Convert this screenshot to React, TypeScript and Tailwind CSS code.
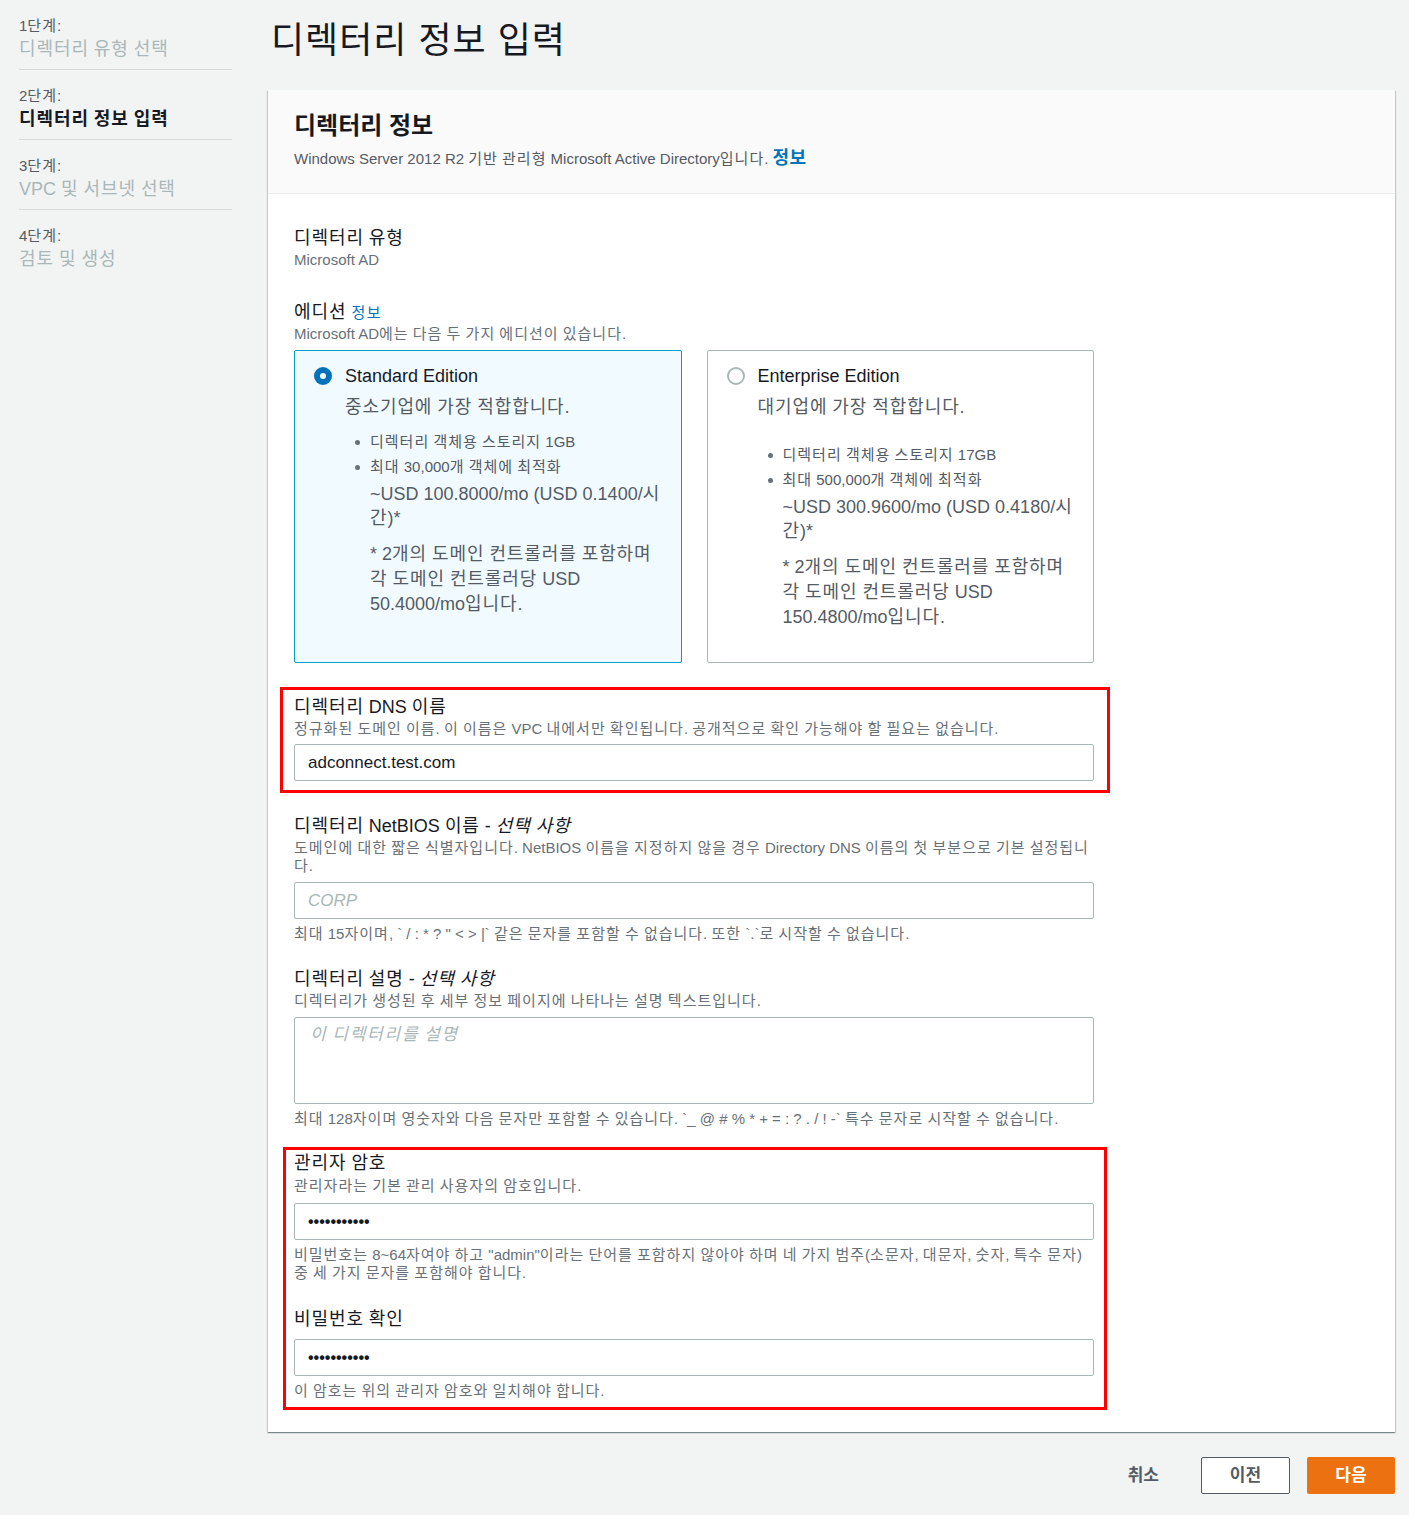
import React from "react";

const font = {
  fontFamily: '"Liberation Sans", "Noto Sans CJK KR", sans-serif',
};

// Hangul runs get a little extra spacing so the Korean reads as wide as in the screenshot
function ko(text: string, cls: string) {
  return text.split(/([\uAC00-\uD7A3]+)/).map((part, i) =>
    /[\uAC00-\uD7A3]/.test(part) ? (
      <span key={i} className={cls}>
        {part}
      </span>
    ) : (
      part
    )
  );
}

const K15 = "tracking-[1px]";
const K18 = "tracking-[0.9px]";

const steps = [
  { step: "1단계:", title: "디렉터리 유형 선택", active: false },
  { step: "2단계:", title: "디렉터리 정보 입력", active: true },
  { step: "3단계:", title: "VPC 및 서브넷 선택", active: false },
  { step: "4단계:", title: "검토 및 생성", active: false },
];

const editions = [
  {
    name: "Standard Edition",
    desc: "중소기업에 가장 적합합니다.",
    bullets: ["디렉터리 객체용 스토리지 1GB", "최대 30,000개 객체에 최적화"],
    price: "~USD 100.8000/mo (USD 0.1400/시간)*",
    note: "* 2개의 도메인 컨트롤러를 포함하며 각 도메인 컨트롤러당 USD 50.4000/mo입니다.",
    selected: true,
  },
  {
    name: "Enterprise Edition",
    desc: "대기업에 가장 적합합니다.",
    bullets: ["디렉터리 객체용 스토리지 17GB", "최대 500,000개 객체에 최적화"],
    price: "~USD 300.9600/mo (USD 0.4180/시간)*",
    note: "* 2개의 도메인 컨트롤러를 포함하며 각 도메인 컨트롤러당 USD 150.4800/mo입니다.",
    selected: false,
  },
];

function Radio({ checked }: { checked: boolean }) {
  return checked ? (
    <span className="w-[18px] h-[18px] rounded-full bg-[#0073bb] flex items-center justify-center shrink-0">
      <span className="w-[6px] h-[6px] rounded-full bg-white" />
    </span>
  ) : (
    <span className="w-[18px] h-[18px] rounded-full border-2 border-[#aab7b8] bg-white shrink-0" />
  );
}

function EditionCard({ e }: { e: (typeof editions)[number] }) {
  return (
    <div
      className={`flex-1 h-[313px] rounded-[2px] border pl-[19px] pr-[14px] pt-[14px] ${
        e.selected ? "border-[#00a1c9] bg-[#f1faff]" : "border-[#aab7b8] bg-white"
      }`}
    >
      <div className="flex items-center gap-[13px]">
        <Radio checked={e.selected} />
        <span className="text-[18px] leading-[22px] text-[#16191f]">{e.name}</span>
      </div>
      <div className="pl-[31px]">
        <p className="mt-[9px] text-[18px] leading-[22px] text-[#545b64]">{ko(e.desc, K18)}</p>
        <div className={e.selected ? "mt-[12px]" : "mt-[25px]"}>
          {e.bullets.map((b) => (
            <div key={b} className="flex items-center h-[25px] text-[15px] text-[#545b64]">
              <span className="ml-[10px] w-[5px] h-[5px] rounded-full bg-[#687078] shrink-0" />
              <span className="ml-[10px]">{ko(b, K15)}</span>
            </div>
          ))}
        </div>
        <div className="pl-[25px]">
          <p className="mt-[2px] text-[18px] leading-[24px] text-[#545b64]">{ko(e.price, K18)}</p>
          <p className="mt-[12px] text-[18px] leading-[25px] text-[#545b64]">{ko(e.note, K18)}</p>
        </div>
      </div>
    </div>
  );
}

function Label({ children }: { children: React.ReactNode }) {
  return <div className="text-[18px] leading-[22px] text-[#16191f]">{children}</div>;
}

function Desc({ text, className = "" }: { text: string; className?: string }) {
  return <div className={`text-[15px] leading-[18px] text-[#687078] ${className}`}>{ko(text, K15)}</div>;
}

function Input({ value, placeholder, dots }: { value?: string; placeholder?: string; dots?: boolean }) {
  return (
    <div className="h-[37px] border border-[#aab7b8] rounded-[2px] bg-white flex items-center px-[13px]">
      {value ? (
        <span className={dots ? "text-[16px] font-bold text-[#16191f]" : "text-[17px] text-[#16191f]"}>
          {value}
        </span>
      ) : (
        <span className="text-[17px] italic text-[#aab7b8]">{placeholder}</span>
      )}
    </div>
  );
}

export default function App() {
  return (
    <div className="min-h-screen bg-[#f2f3f3] flex" style={font}>
      <aside className="w-[213px] ml-[19px] shrink-0">
        {steps.map((s, i) => (
          <div
            key={s.step}
            className={`h-[70px] pt-[17px] ${i < steps.length - 1 ? "border-b border-[#d5dbdb]" : ""}`}
          >
            <div className="text-[15px] leading-[18px] text-[#545b64]">{ko(s.step, K15)}</div>
            <div
              className={`text-[18px] leading-[28px] ${
                s.active ? "font-bold text-[#16191f]" : "text-[#aab7b8]"
              }`}
            >
              {ko(s.title, K18)}
            </div>
          </div>
        ))}
      </aside>

      <main className="flex-1 ml-[36px] mr-[14px]">
        <h1 className="mt-[18px] ml-[3px] text-[36px] leading-[46px] text-[#16191f] font-normal tracking-[1px]">
          디렉터리 정보 입력
        </h1>

        <section className="mt-[26px] bg-white shadow-[0_1px_1px_0_rgba(0,28,36,0.3),1px_1px_1px_0_rgba(0,28,36,0.15),-1px_1px_1px_0_rgba(0,28,36,0.15)]">
          <header className="h-[104px] bg-[#fafafa] border-b border-[#eaeded] pl-[26px] pt-[21px]">
            <h2 className="text-[24px] leading-[30px] font-bold text-[#16191f]">디렉터리 정보</h2>
            <p className="mt-[7px] text-[15px] leading-[20px] text-[#545b64]">
              {ko("Windows Server 2012 R2 기반 관리형 Microsoft Active Directory입니다.", K15)}{" "}
              <span className="text-[18px] font-bold text-[#0073bb] tracking-[0.5px]">정보</span>
            </p>
          </header>

          <div className="pl-[26px] pr-[300px] pt-[33px] pb-[22px]">
            <div className="w-[800px]">
              <Label>{ko("디렉터리 유형", K18)}</Label>
              <Desc className="mt-[2px]" text="Microsoft AD" />

              <div className="mt-[32px]">
                <Label>
                  {ko("에디션", K18)} <span className="text-[15px] text-[#0073bb] tracking-[1.5px]">정보</span>
                </Label>
                <Desc className="mt-[1px]" text="Microsoft AD에는 다음 두 가지 에디션이 있습니다." />
                <div className="mt-[7px] flex gap-[25px]">
                  {editions.map((e) => (
                    <EditionCard key={e.name} e={e} />
                  ))}
                </div>
              </div>

              <div className="mt-[24px] -ml-[14px] -mr-[16px] border-[3px] border-[#ff0000] pl-[11px] pr-[13px] pt-[6px] pb-[9px]">
                <Label>{ko("디렉터리 DNS 이름", K18)}</Label>
                <Desc
                  className="mt-[2px]"
                  text="정규화된 도메인 이름. 이 이름은 VPC 내에서만 확인됩니다. 공개적으로 확인 가능해야 할 필요는 없습니다."
                />
                <div className="mt-[6px]">
                  <Input value="adconnect.test.com" />
                </div>
              </div>

              <div className="mt-[22px]">
                <Label>
                  {ko("디렉터리 NetBIOS 이름 - ", K18)}
                  <i>{ko("선택 사항", K18)}</i>
                </Label>
                <Desc
                  className="mt-[2px]"
                  text="도메인에 대한 짧은 식별자입니다. NetBIOS 이름을 지정하지 않을 경우 Directory DNS 이름의 첫 부분으로 기본 설정됩니다."
                />
                <div className="mt-[7px]">
                  <Input placeholder="CORP" />
                </div>
                <Desc
                  className="mt-[6px]"
                  text={'최대 15자이며, ` / : * ? " < > |` 같은 문자를 포함할 수 없습니다. 또한 `.`로 시작할 수 없습니다.'}
                />
              </div>

              <div className="mt-[25px]">
                <Label>
                  {ko("디렉터리 설명 - ", K18)}
                  <i>{ko("선택 사항", K18)}</i>
                </Label>
                <Desc className="mt-[2px]" text="디렉터리가 생성된 후 세부 정보 페이지에 나타나는 설명 텍스트입니다." />
                <div className="mt-[7px] h-[87px] border border-[#aab7b8] rounded-[2px] bg-white px-[15px] pt-[4px]">
                  <span className="text-[17px] italic text-[#aab7b8]">{ko("이 디렉터리를 설명", "tracking-[1.8px]")}</span>
                </div>
                <Desc
                  className="mt-[6px]"
                  text="최대 128자이며 영숫자와 다음 문자만 포함할 수 있습니다. `_ @ # % * + = : ? . / ! -` 특수 문자로 시작할 수 없습니다."
                />
              </div>

              <div className="mt-[19px] -ml-[11px] -mr-[13px] border-[3px] border-[#ff0000] pl-[8px] pr-[10px] pt-[2px] pb-[7px]">
                <Label>{ko("관리자 암호", K18)}</Label>
                <Desc className="mt-[3px]" text="관리자라는 기본 관리 사용자의 암호입니다." />
                <div className="mt-[8px]">
                  <Input value="•••••••••••" dots />
                </div>
                <Desc
                  className="mt-[6px]"
                  text={'비밀번호는 8~64자여야 하고 "admin"이라는 단어를 포함하지 않아야 하며 네 가지 범주(소문자, 대문자, 숫자, 특수 문자) 중 세 가지 문자를 포함해야 합니다.'}
                />
                <div className="mt-[26px]">
                  <Label>{ko("비밀번호 확인", K18)}</Label>
                </div>
                <div className="mt-[9px]">
                  <Input value="•••••••••••" dots />
                </div>
                <Desc className="mt-[6px]" text="이 암호는 위의 관리자 암호와 일치해야 합니다." />
              </div>
            </div>
          </div>
        </section>

        <footer className="mt-[25px] mb-[20px] flex items-center justify-end">
          <button className="text-[17px] font-bold text-[#545b64] mr-[42px]">취소</button>
          <button className="w-[89px] h-[37px] rounded-[2px] border border-[#545b64] bg-white text-[17px] font-bold text-[#545b64]">
            이전
          </button>
          <button className="ml-[17px] w-[88px] h-[37px] rounded-[2px] bg-[#ec7211] text-[17px] font-bold text-white">
            다음
          </button>
        </footer>
      </main>
    </div>
  );
}
